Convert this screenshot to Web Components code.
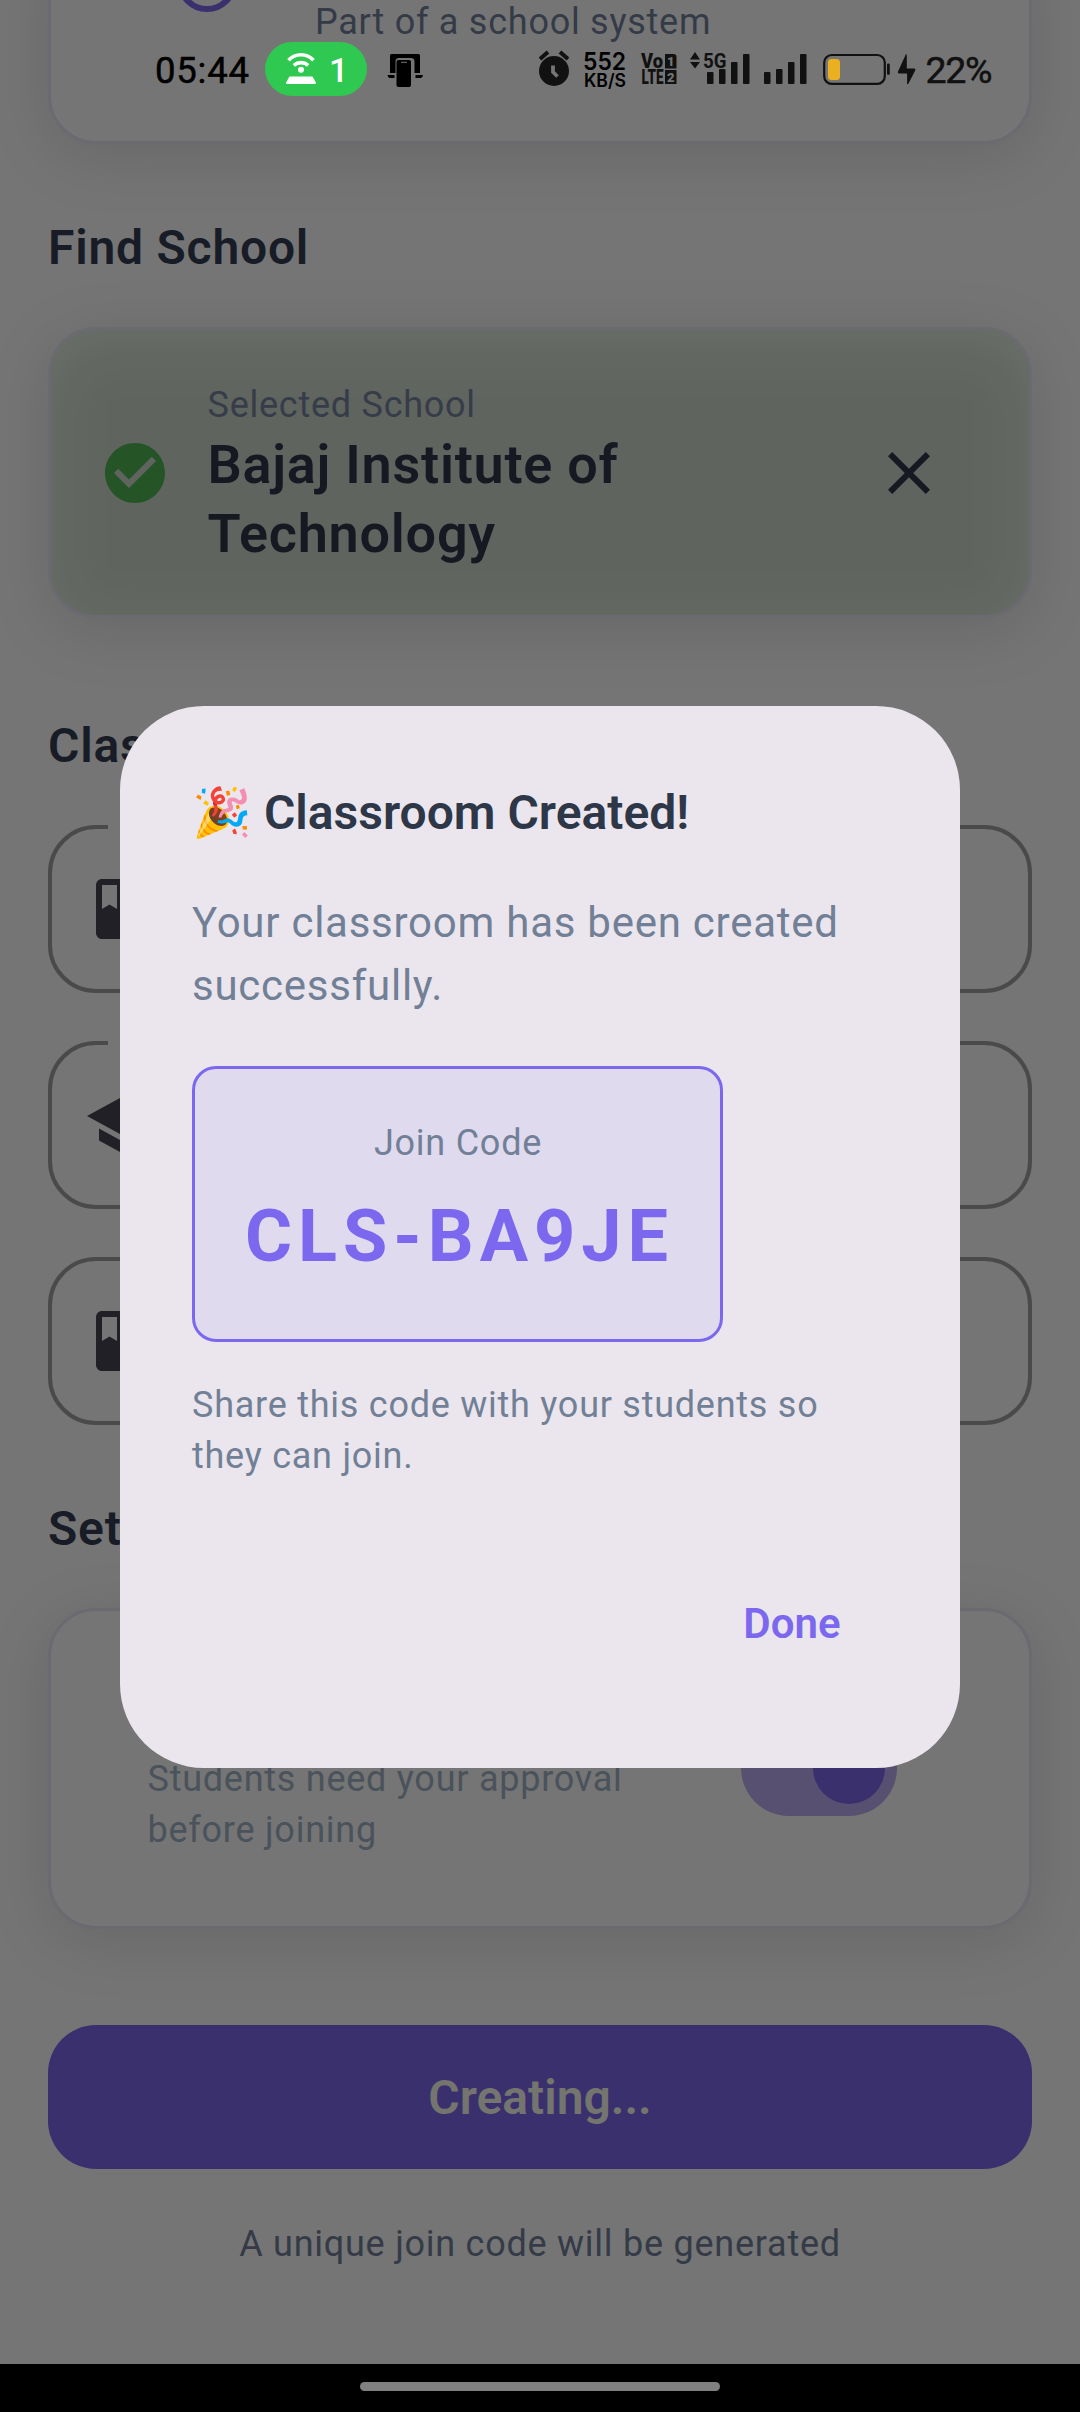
<!DOCTYPE html>
<html lang="en">
<head>
<meta charset="utf-8">
<title>Create Classroom</title>
<style>
html,body{margin:0;padding:0}
body{width:1080px;height:2412px;overflow:hidden;background:#757575;font-family:Roboto,"Noto Sans",sans-serif;position:relative}
</style>
</head>
<body>
<classroom-page></classroom-page>
<script>
const define = (name, html) => customElements.define(name, class extends HTMLElement {
  constructor() {
    super();
    const t = document.createElement('template');
    t.innerHTML = html;
    this.attachShadow({ mode: 'open' }).append(t.content.cloneNode(true));
  }
});

define('section-title', `<style>
:host{display:block;font:600 48px/60px Roboto,sans-serif;letter-spacing:.78px;color:#171c26}
</style><slot></slot>`);

define('soft-card', `<style>
:host{display:block;position:relative;z-index:0}
.shade{position:absolute;inset:12px 0 -12px;border-radius:48px;background:rgba(0,0,0,.115);filter:blur(30px);z-index:-2}
.face{box-sizing:border-box;height:100%;border:3px solid #6a6a70;border-radius:48px;background:var(--face,#757575)}
</style><div class="shade"></div><div class="face"><slot></slot></div>`);

define('system-card', `<style>
:host{display:block;height:204px;margin-top:-60px}
soft-card{height:204px}
.row{display:flex;align-items:flex-start}
.ring{box-sizing:border-box;width:60px;height:60px;border:6px solid #3a306e;border-radius:50%;margin:9px 0 0 126px}
p{margin:54px 0 0 78px;font-size:36px;line-height:50px;letter-spacing:.75px;color:#343b47;white-space:nowrap}
</style><soft-card><div class="row"><div class="ring"></div><p>Part of a school system</p></div></soft-card>`);

define('selected-school', `<style>
:host{display:block;height:291px}
soft-card{height:291px;--face:rgba(55,84,57,.16)}
.row{display:flex;align-items:center;height:285px;padding:0 48px}
.text{width:594px;margin-left:36.5px;padding-top:2px}
small{display:block;font-size:36px;line-height:50px;letter-spacing:.75px;color:#363c48}
b{display:block;font-weight:600;font-size:54px;line-height:69px;letter-spacing:.75px;color:#171922}
svg{width:72px;height:72px;flex:none}
.x{margin-left:71.500px}
</style><soft-card><div class="row">
<svg viewBox="0 0 24 24"><path fill="#255526" d="M12 2C6.480 2 2 6.480 2 12s4.480 10 10 10 10-4.480 10-10S17.520 2 12 2zm-2 15-5-5 1.410-1.410L10 14.170l7.590-7.590L19 8l-9 9z"/></svg>
<div class="text"><small>Selected School</small><b>Bajaj Institute of Technology</b></div>
<svg class="x" viewBox="0 0 24 24"><path fill="#171922" d="M19 6.410 17.590 5 12 10.590 6.410 5 5 6.410 10.590 12 5 17.590 6.410 19 12 13.410 17.590 19 19 17.590 13.410 12z"/></svg>
</div></soft-card>`);

define('outlined-field', `<style>
:host{display:block;position:relative;box-sizing:border-box;height:168px;border:4.500px solid #4a4a4a;border-radius:48px}
.in{display:flex;align-items:center;height:100%;padding-left:32px}
::slotted(svg){width:72px;height:72px;fill:#212026}
</style><div class="in"><slot></slot></div>`);
define('field-notch', `<style>
:host{display:block;position:absolute;top:-5px;left:56px;width:300px;height:6px;background:#757575}
</style>`);

define('approval-card', `<style>
:host{display:block;height:321px}
soft-card{height:321px}
.row{display:flex;align-items:center;height:315px;padding:0 132px 0 96.500px;justify-content:space-between}
p{margin:0;width:520px;padding-top:73px;font-size:36px;line-height:50.600px;letter-spacing:.75px;color:#4a525b}
.track{box-sizing:border-box;width:156px;height:96px;border-radius:48px;background:#575070;padding:12px;display:flex;justify-content:flex-end;margin-top:-1px}
.thumb{width:72px;height:72px;border-radius:50%;background:#3a306e}
</style><soft-card><div class="row"><p>Students need your approval before joining</p><div class="track"><div class="thumb"></div></div></div></soft-card>`);

define('primary-button', `<style>
:host{display:flex;align-items:center;justify-content:center;box-sizing:border-box;height:144px;padding-top:2px;border-radius:48px;background:#3a306e;color:#75756f;font-size:48px;font-weight:600;line-height:60px}
</style><slot></slot>`);

define('form-page', `<style>
:host{display:block;padding:0 48px;height:2364px;box-sizing:border-box;overflow:hidden;background:#757575}
.t1{margin:74px 0 49px}.t2{margin:98px 0 49px}.t3{margin:74px 0 49px}
.fields{display:flex;flex-direction:column;gap:48px}
primary-button{margin-top:96px}
.note{margin:50px 0 0;text-align:center;font-size:36px;line-height:50px;letter-spacing:.75px;color:#343b47}
.col{display:flow-root}
</style><div class="col">
<system-card></system-card>
<section-title class="t1">Find School</section-title>
<selected-school></selected-school>
<section-title class="t2">Class</section-title>
<div class="fields">
<outlined-field><svg viewBox="0 0 24 24"><path d="M18 2H6c-1.100 0-2 .9-2 2v16c0 1.100.9 2 2 2h12c1.100 0 2-.9 2-2V4c0-1.100-.9-2-2-2zM6 4h5v8l-2.500-1.500L6 12V4z"/></svg><field-notch></field-notch></outlined-field>
<outlined-field><svg viewBox="0 0 24 24"><path d="M5 13.180v4L12 21l7-3.820v-4L12 17l-7-3.820zM12 3 1 9l11 6 9-4.910V17h2V9L12 3z"/></svg><field-notch></field-notch></outlined-field>
<outlined-field><svg viewBox="0 0 24 24"><path d="M18 2H6c-1.100 0-2 .9-2 2v16c0 1.100.9 2 2 2h12c1.100 0 2-.9 2-2V4c0-1.100-.9-2-2-2zM6 4h5v8l-2.500-1.500L6 12V4z"/></svg></outlined-field>
</div>
<section-title class="t3">Set</section-title>
<approval-card></approval-card>
<primary-button>Creating...</primary-button>
<p class="note">A unique join code will be generated</p>
</div>`);

define('join-code', `<style>
:host{display:flex;flex-direction:column;align-items:center;box-sizing:border-box;width:531px;height:276px;padding:49px 0 0 1px;border:3px solid #7b68ee;border-radius:24px;background:#dfdaee}
small{font-size:36px;line-height:50px;letter-spacing:.75px;color:#718096}
b{margin:18px 0 0 3px;font-weight:700;font-size:72px;line-height:101px;letter-spacing:6px;color:#7b68ee}
</style><small>Join Code</small><b><slot></slot></b>`);

define('created-dialog', `<style>
:host{display:block;position:absolute;left:120px;top:706px;box-sizing:border-box;width:840px;height:1062px;padding:77px 72px 0;border-radius:84px;background:#ebe6ed;color:#718096}
h1{margin:0;font-weight:600;font-size:48px;line-height:60px;color:#2d3748;white-space:nowrap}
p{margin:0;letter-spacing:.75px}
.msg{margin:48px 0 49px;font-size:42px;line-height:63px}
.share{margin-top:38px;font-size:36px;line-height:50.700px}
.actions{display:flex;justify-content:flex-end;margin-top:113px;padding-right:47.500px;font-weight:600;font-size:42px;line-height:60px;color:#7b68ee}
</style><h1>🎉 Classroom Created!</h1>
<p class="msg">Your classroom has been created successfully.</p>
<join-code>CLS-BA9JE</join-code>
<p class="share">Share this code with your students so they can join.</p>
<div class="actions">Done</div>`);

define('status-bar', `<style>
:host{display:flex;align-items:center;position:absolute;left:0;top:42px;width:1080px;height:54px;font-family:Roboto,sans-serif}
svg{display:block;flex:none;height:54px;fill:#111;overflow:visible}
.pill{display:flex;width:102px;height:54px;border-radius:27px;background:#2fc850;margin-left:15px}
.pill svg{fill:#fff}
</style>
<svg style="margin-left:154px" width="96" viewBox="0 0 96 54"><text x="1" y="41" font-size="36.500" fill="#000" stroke="#000" stroke-width=".5" textLength="94">05:44</text></svg>
<div class="pill"><svg width="102" viewBox="0 0 102 54"><g fill="none" stroke="#fff" stroke-width="3.600"><path d="M23.500 18.200a17 17 0 0 1 25 0"/><path d="M28.800 23.300a11 11 0 0 1 14.400 0"/></g><circle cx="36" cy="27.700" r="3"/><path d="M24.500 34.500h23l3.400 6q.3 1.500-1.400 1.500h-27q-1.700 0-1.400-1.500z"/><text x="64" y="40" font-size="34" font-weight="500">1</text></svg></div>
<svg style="margin-left:20px" width="38" viewBox="0 0 38 54"><g fill="#000"><path d="M4.500 12h27q1.500 0 1.500 1.500V31h-5.500V19.500q0-3.500-3.500-3.500H12q-3.500 0-3.500 3.500V31H3V13.500Q3 12 4.500 12z"/><path d="M1 33h6.500v3H2.500Q1 36 .5 33zM28.500 33h7.500q-.5 3-2 3h-5.500z"/><rect x="9.500" y="18" width="14.500" height="27" rx="2"/></g><path d="M14 20.300h6" stroke="#757575" stroke-width="1"/></svg>
<svg style="margin-left:113px" width="32" viewBox="0 0 32 54"><circle cx="16" cy="29" r="15"/><path d="M2 17l8-7M30 17l-8-7" stroke="#111" stroke-width="4" fill="none"/><path d="M15 23.500v6.500l4.500 4.500" fill="none" stroke="#757575" stroke-width="3.800"/></svg>
<svg style="margin-left:13px" width="44" viewBox="0 0 44 54"><text x="0" y="28" font-size="24" font-weight="600" fill="#000" font-family="Inter,sans-serif" textLength="43" lengthAdjust="spacingAndGlyphs">552</text><text x="1" y="45" font-size="18.500" font-weight="600" fill="#000" font-family="Inter,sans-serif" textLength="42" lengthAdjust="spacingAndGlyphs">KB/S</text></svg>
<svg style="margin-left:14px" width="37" viewBox="0 0 37 54"><g font-family="Roboto,sans-serif" font-weight="900" font-size="19.500"><text x="0" y="26" textLength="22" lengthAdjust="spacingAndGlyphs">Vo</text><text x="0.500" y="42" textLength="22" lengthAdjust="spacingAndGlyphs">LTE</text><path d="M24 12h8.500q3 0 3 3v11.500H24zM24 28h11.500v14H24z"/><g fill="#757575" font-size="13" text-anchor="middle"><text x="29.800" y="24">1</text><text x="29.800" y="40">2</text></g></g></svg>
<svg style="margin-left:11px" width="62" viewBox="0 0 62 54"><path d="M1 17.500 6 10l5 7.500zM1 20h10l-5 6.500z"/><text x="14" y="26" font-size="21" font-weight="700" textLength="23.500" lengthAdjust="spacingAndGlyphs">5G</text><rect x="18" y="30" width="6.500" height="12" rx="1"/><rect x="30" y="27" width="6.500" height="15" rx="1"/><rect x="42" y="20" width="6.500" height="22" rx="1"/><rect x="54" y="12" width="6.500" height="30" rx="1"/></svg>
<svg style="margin-left:13px" width="46" viewBox="0 0 46 54"><rect x="0" y="30" width="6.500" height="12" rx="1"/><rect x="12" y="27" width="6.500" height="15" rx="1"/><rect x="24" y="20" width="6.500" height="22" rx="1"/><rect x="36" y="12" width="6.500" height="30" rx="1"/></svg>
<svg style="margin-left:13px" width="68" viewBox="0 0 68 54"><rect x="1.200" y="13" width="60.600" height="28.800" rx="7.500" fill="none" stroke="#111" stroke-width="2.200"/><rect x="5" y="17" width="12" height="21" rx="3.500" fill="#ebb01f"/><rect x="64" y="21.500" width="2.800" height="11.500" rx="1.400"/></svg>
<svg style="margin-left:6px" width="20" viewBox="0 0 20 54"><path d="M9 12q1 0 .8 3v11.500h7.700q1.500.5.700 2l-6.700 13q-1 1.500-1.400.2V31.500H1.800Q.3 31 1 29.500z"/></svg>
<svg style="margin-left:8px" width="68" viewBox="0 0 68 54"><text x="0.500" y="41" font-size="37.500" stroke="#111" stroke-width=".5" textLength="67">22%</text></svg>`);

define('nav-bar', `<style>
:host{display:flex;justify-content:center;align-items:flex-start;height:48px;background:#000}
i{width:360px;height:9px;margin-top:18px;border-radius:4.500px;background:#808080}
</style><i></i>`);

define('classroom-page', `<style>:host{display:block}</style>
<form-page></form-page><nav-bar></nav-bar><status-bar></status-bar><created-dialog></created-dialog>`);
</script>
</body>
</html>
